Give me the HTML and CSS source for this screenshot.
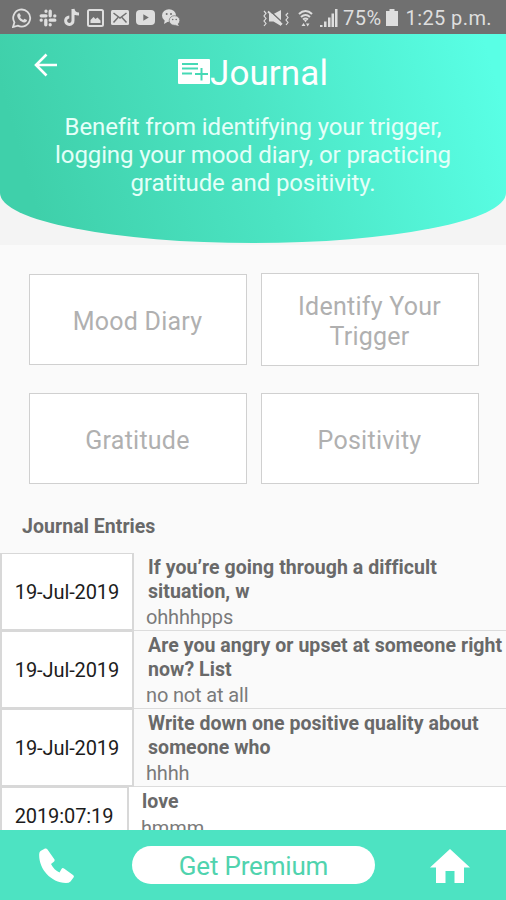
FILE: index.html
```html
<!DOCTYPE html>
<html lang="en">
<head>
<meta charset="utf-8">
<title>Journal</title>
<link rel="stylesheet" href="styles.css">
</head>
<body>
<div class="app">
  <div class="status">
    <div class="status-left">
      <svg width="20" height="20" viewBox="0 0 20 20"><path d="M1 19l1.400-4.600A8.500 8.500 0 1 1 5.800 17.600z" fill="none" stroke="currentColor" stroke-width="1.800"/><path d="M6.200 5.500l1.500-.3 1.200 2.700-.9 1.200c.8 1.400 1.700 2.200 3.200 2.900l1.200-1.200 2.600 1.300c0 1.800-1.300 2.500-2.800 2.400C8.800 14.200 5.300 10.600 5.200 7.600c0-.8.300-1.600 1-2.100z" fill="currentColor"/></svg>
      <svg width="18" height="18" viewBox="0 0 18 18" fill="none" stroke="currentColor" stroke-width="3.300" stroke-linecap="round"><path d="M7 2.200v.1M7 6.800H2.200M15.800 6.800v.1M11.200 2.200v4.600M15.800 11.200h-4.600M11.200 15.800v-.1M2.200 11.200v-.1M6.800 11.200v4.600"/></svg>
      <svg width="16" height="19" viewBox="0 0 16 19"><path d="M9 1v11.500A3.700 3.700 0 1 1 5.300 9M9 1c.3 3 2.500 5 6 5" fill="none" stroke="currentColor" stroke-width="3"/></svg>
      <svg width="17" height="18" viewBox="0 0 17 18"><rect x="1" y="1" width="15" height="16" rx="1.500" fill="none" stroke="currentColor" stroke-width="2"/><path d="M3.500 14V11l3-3 2 2 2-1.500 3 3V14z" fill="currentColor"/></svg>
      <svg width="18" height="15" viewBox="0 0 18 15"><rect width="18" height="15" rx="1.500" fill="currentColor"/><path d="M2.500 3L9 8l6.500-5M2.500 12.500L7 7.500M15.500 12.500L11 7.500" fill="none" stroke="#707070" stroke-width="1.500"/></svg>
      <svg width="19" height="15" viewBox="0 0 19 15"><rect width="19" height="15" rx="4" fill="currentColor"/><path d="M7.300 4.300v6.400l5.500-3.200z" fill="#707070"/></svg>
      <svg width="18" height="17" viewBox="0 0 18 17"><ellipse cx="7" cy="6.500" rx="7" ry="6.300" fill="currentColor"/><path d="M2 15l1-5 4 2z" fill="currentColor"/><ellipse cx="12.500" cy="11.500" rx="5.300" ry="4.800" fill="currentColor" stroke="#707070" stroke-width=".7"/><path d="M15 14l2 3-4-1z" fill="currentColor"/><g fill="#707070"><circle cx="4.700" cy="5" r="1"/><circle cx="9" cy="5" r="1"/><circle cx="10.700" cy="10.500" r=".8"/><circle cx="14.200" cy="10.500" r=".8"/></g></svg>
    </div>
    <div class="status-right">
      <svg class="mute" width="26" height="18" viewBox="0 0 26 18"><path d="M6 5h4.500L18 1v16l-7.500-4.500H6z" fill="currentColor"/><path d="M6.500 1.500l13 12" stroke="#707070" stroke-width="1.500"/><path d="M5 2.500l14 13" stroke="currentColor" stroke-width="1.800"/><path d="M1 2l2 2.300L1 7l2 2.500L1 12l2 2.500L1 17M25 4l-2 2 2 2.500L23 11l2 2.500L23 16" fill="none" stroke="currentColor" stroke-width="1.200"/></svg>
      <svg class="wifi" width="15" height="18" viewBox="0 0 15 18"><path d="M1 5c4-4 9-4 13 0M3 8c3-2.700 6-2.700 9 0M5 10.500c1.700-1.400 3.300-1.400 5 0" fill="none" stroke="currentColor" stroke-width="2"/><path d="M6 11h3l-1.500 2.500zM3.500 17l2-3 2 3zM8 14.500h3.500l-1.800 3z" fill="currentColor"/></svg>
      <svg class="signal" width="18" height="18" viewBox="0 0 18 18" fill="currentColor"><path d="M0 16h2.500v2H0zM4 12.500h2.500V18H4zM8 8.500h2.500V18H8zM11.500 4.500H14V18h-2.500zM15 0h2.500v18H15z"/></svg>
      <span class="pct">75%</span>
      <svg class="batt" width="12" height="17" viewBox="0 0 12 17"><path d="M3.500 0h5v2H12v15H0V2h3.500z" fill="currentColor"/></svg>
      <span class="clock">1:25 p.m.</span>
    </div>
  </div>

  <div class="hero-wrap">
    <header class="hero">
      <div class="hero-top">
        <svg class="back" width="24" height="24" viewBox="0 0 24 24"><path d="M23 12H2.500M12.500 1.500L2 12l10.500 10.500" fill="none" stroke="#fff" stroke-width="2.600"/></svg>
        <svg class="note" width="32" height="25" viewBox="0 0 32 25"><rect width="32" height="25" rx="1" fill="#fff"/><path d="M4 5h16M4 9.500h16M4 14.500h10M17 15h13M23.500 9v12.500" fill="none" stroke="#46d9b5" stroke-width="2"/></svg>
        <h1 class="title">Journal</h1>
      </div>
      <p class="intro">Benefit from identifying your trigger,<br>logging your mood diary, or practicing<br>gratitude and positivity.</p>
    </header>
  </div>

  <div class="tiles">
    <div class="tile">Mood Diary</div>
    <div class="tile tall">Identify Your<br>Trigger</div>
    <div class="tile">Gratitude</div>
    <div class="tile">Positivity</div>
  </div>

  <h2 class="section">Journal Entries</h2>

  <div class="entries">
    <div class="entry">
      <div class="date">19-Jul-2019</div>
      <div class="body"><div class="q">If you’re going through a difficult<br>situation, w</div><div class="a">ohhhhpps</div></div>
    </div>
    <div class="entry">
      <div class="date">19-Jul-2019</div>
      <div class="body"><div class="q">Are you angry or upset at someone right<br>now? List</div><div class="a">no not at all</div></div>
    </div>
    <div class="entry">
      <div class="date">19-Jul-2019</div>
      <div class="body"><div class="q">Write down one positive quality about<br>someone who</div><div class="a">hhhh</div></div>
    </div>
    <div class="entry short">
      <div class="date">2019:07:19</div>
      <div class="body"><div class="q">love</div><div class="a">hmmm</div></div>
    </div>
  </div>

  <nav class="bottom">
    <svg class="phone" width="36" height="36" viewBox="0 0 36 36"><path d="M1.500 3L6 .5Q7.500 0 8.500 1.500L15.500 11.500Q16 13 14.500 14L12 16C14 20 17 23 20.500 24.500L22.500 21Q23.500 19.500 25 20.500L34 27Q35.500 28 34.500 29.500L31.500 33.500Q30 35 27 35C11 34.500-.5 20 .2 6Q.3 4 1.500 3z" fill="#fff"/></svg>
    <div class="premium">Get Premium</div>
    <svg class="home" width="40" height="35" viewBox="0 0 40 35"><path d="M20 0L40 18.500H34V34H24.500V22H15.500V34H6V18.500H0z" fill="#fff"/></svg>
  </nav>
</div>
</body>
</html>
```

FILE: styles.css
```css
* { box-sizing: border-box; }
body { margin: 0; font-family: Roboto, sans-serif; background: #fafafa; }
.app { width: 506px; height: 900px; display: flex; flex-direction: column; overflow: hidden; }
.app > * { flex-shrink: 0; }
svg { display: block; flex-shrink: 0; }

.status { height: 34px; background: #707070; color: #dedede; display: flex; justify-content: space-between; padding: 1px 14px 0 12px; }
.status-left, .status-right { display: flex; align-items: center; }
.status-left { gap: 7px; }
.pct, .clock { font-size: 20px; line-height: 34px; white-space: nowrap; }
.pct { letter-spacing: .5px; margin-left: 5px; }
.wifi { margin-left: 9px; }
.signal { margin-left: 7px; }
.batt { margin: 0 8px 0 4px; }
.clock { letter-spacing: .4px; }

.hero-wrap { height: 211px; background: #f4f4f4; }
.hero { height: 209px; border-radius: 0 0 50% 50% / 0 0 50px 50px; background: linear-gradient(74deg, #3fd0aa 8%, #4be4c3 50%, #59ffe5 96%); color: #fff; }
.hero-top { display: flex; height: 79px; padding: 0 34px; }
.back { margin-top: 19px; }
.note { margin: 25px 0 0 120px; }
.title { margin: 19px 0 0; font-size: 35px; line-height: 42px; font-weight: 400; letter-spacing: .1px; }
.intro { margin: 0; text-align: center; font-size: 24px; line-height: 28px; letter-spacing: -.11px; white-space: nowrap; color: #e4fff8; }

.tiles { display: grid; grid-template-columns: 218px 218px; column-gap: 14px; row-gap: 27px; padding: 28px 0 0 28.500px; align-items: center; }
.tile { height: 91px; border: 1.500px solid #d0d0d0; background: #fff; color: #b0b0b0; font-size: 25px; line-height: 30px; letter-spacing: .25px; display: flex; align-items: center; justify-content: center; text-align: center; padding-top: 4px; }
.tall { height: 93px; }

.section { margin: 31px 0 0 22px; font-size: 19.500px; line-height: 24px; letter-spacing: .05px; font-weight: 700; color: #696969; }

.entries { margin-top: 14px; height: 277px; overflow: hidden; }
.entry { display: flex; height: 78px; border-bottom: 1px solid #dcdcdc; }
.date { width: 134px; height: 78px; flex-shrink: 0; border: 2px solid #d8d8d8; border-top-width: 1px; background: #fff; color: #1c1c1c; font-size: 20px; letter-spacing: -.1px; display: flex; align-items: center; justify-content: center; }
.body { padding: 3px 0 0 14px; white-space: nowrap; }
.q { font-size: 19.500px; line-height: 23.500px; letter-spacing: .06px; font-weight: 700; color: #696969; }
.a { font-size: 20px; line-height: 24px; margin: 2px 0 0 -2px; letter-spacing: -.15px; color: #7a7a7a; }
.short { background: #fff; }
.short .date { width: 129px; height: 59px; padding-right: 1px; }
.short .body { padding-left: 13px; }
.short .a { margin-left: -1px; }

.bottom { height: 70px; background: #4de3c2; display: flex; align-items: flex-start; }
.phone { margin: 18px 0 0 39px; }
.premium { margin: 16px 0 0 57px; width: 243px; height: 38px; border-radius: 19px; background: #fff; color: #50d3ae; font-size: 26px; line-height: 41px; text-align: center; letter-spacing: -.2px; }
.home { margin: 19px 0 0 55px; }
```
